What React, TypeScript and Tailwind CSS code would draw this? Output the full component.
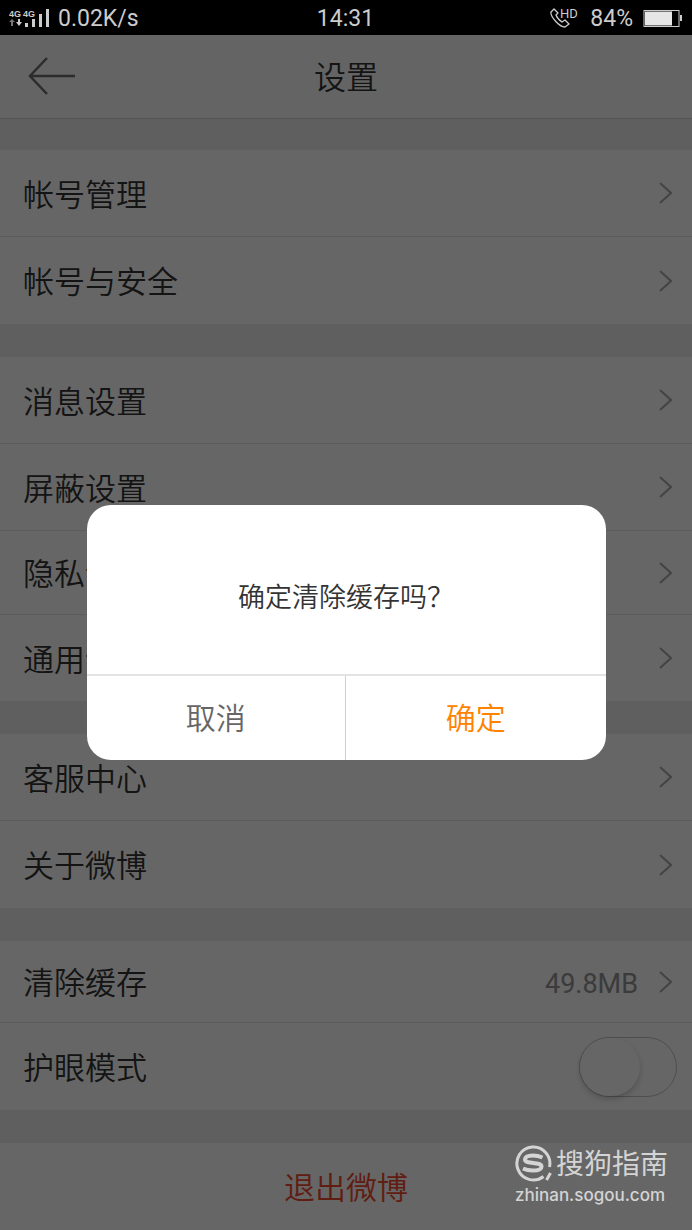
import React, { useState } from "react";

interface SettingItem {
  label: string;
  value?: string;
  toggle?: boolean;
  height?: string;
}

const sections: SettingItem[][] = [
  [{ label: "帐号管理" }, { label: "帐号与安全" }],
  [
    { label: "消息设置" },
    { label: "屏蔽设置" },
    { label: "隐私设置", height: "h-[84px]" },
    { label: "通用设置", height: "h-[86px]" },
  ],
  [{ label: "客服中心" }, { label: "关于微博" }],
  [
    { label: "清除缓存", value: "49.8MB", height: "h-[82px]" },
    { label: "护眼模式", toggle: true },
  ],
];

export default function App() {
  return (
    <div className="flex min-h-screen flex-col bg-black font-['Noto_Sans_CJK_SC',sans-serif] font-[350]">
      <StatusBar />
      <div className="relative flex grow flex-col bg-[#eeeeee]">
        <Header />
        <main className="flex flex-col gap-[33px] pt-[31px]">
          {sections.map((items) => (
            <SettingSection key={items[0].label} items={items} />
          ))}
          <button className="h-[87px] w-full bg-white pb-0.5 text-center text-[31px] leading-none text-[#f04a2c]">
            退出微博
          </button>
        </main>
        <ConfirmDialog />
        <Watermark />
      </div>
    </div>
  );
}

function StatusBar() {
  return (
    <div className="grid h-[35px] grid-cols-3 items-center bg-black pt-0.5 pr-[10px] pl-[9px] font-[Roboto,sans-serif] text-[23px] leading-none font-normal text-[#cccccc]">
      <div className="flex items-center gap-[7px]">
        <SignalIcon />
        <span>0.02K/s</span>
      </div>
      <span className="text-center">14:31</span>
      <div className="flex items-center justify-end gap-[10px]">
        <CallIcon />
        <span>84%</span>
        <BatteryIcon />
      </div>
    </div>
  );
}

function Header() {
  return (
    <header className="grid h-[84px] grid-cols-3 items-center border-b border-[#cccccc] bg-[#fbfbfb] px-7 pb-0.5">
      <button aria-label="返回" className="w-12">
        <svg width="48" height="40" viewBox="0 0 48 40" fill="none" stroke="#6e6e6e" strokeWidth="2.5">
          <path d="M19 2 L2 20 L19 38 M2 20 H47" />
        </svg>
      </button>
      <h1 className="pb-0.5 text-center text-[32px] leading-none text-[#333333]">设置</h1>
    </header>
  );
}

function SettingSection({ items }: { items: SettingItem[] }) {
  return (
    <section className="divide-y divide-[#e6e6e6] bg-white">
      {items.map((item) =>
        item.toggle ? (
          <ToggleRow key={item.label} label={item.label} />
        ) : (
          <button
            key={item.label}
            className={`flex w-full items-center pr-5 pl-[23px] text-left ${item.height ?? "h-[87px]"}`}
          >
            <span className="grow pb-0.5 text-[31px] leading-none text-[#333333]">{item.label}</span>
            {item.value && (
              <span className="mr-[21px] pt-1.5 font-[Roboto,sans-serif] text-[27px] leading-none font-normal text-[#939393]">
                {item.value}
              </span>
            )}
            <svg width="13" height="22" viewBox="0 0 13 22" fill="none" stroke="#a8a8a8" strokeWidth="2">
              <path d="M1 1 L12 11 L1 21" />
            </svg>
          </button>
        )
      )}
    </section>
  );
}

function ToggleRow({ label }: { label: string }) {
  const [on, setOn] = useState(false);

  return (
    <label className="flex h-[87px] items-center justify-between pr-[15px] pl-[23px]">
      <span className="pb-0.5 text-[31px] leading-none text-[#333333]">{label}</span>
      <input
        type="checkbox"
        role="switch"
        checked={on}
        onChange={(e) => setOn(e.target.checked)}
        className="flex h-[60px] w-[98px] appearance-none rounded-full border border-[#c4c4c4] bg-white before:h-full before:w-[60px] before:rounded-full before:bg-white before:shadow-[0_3px_6px_rgba(0,0,0,0.2)] checked:justify-end checked:bg-[#ff8200]"
      />
    </label>
  );
}

function ConfirmDialog() {
  return (
    <div className="absolute inset-0 flex items-center justify-center bg-black/60">
      <div role="dialog" aria-label="清除缓存" className="w-3/4 overflow-hidden rounded-3xl bg-white">
        <p className="flex h-[169px] items-center justify-center pt-3 text-[27px] leading-none text-[#333333]">
          确定清除缓存吗？
        </p>
        <div className="grid h-[86px] grid-cols-2 divide-x divide-[#cfcfcf] border-t-2 border-[#e3e3e3] text-[30px] leading-none">
          <button className="pb-1 text-[#666666]">取消</button>
          <button className="pb-1 text-[#ff8200]">确定</button>
        </div>
      </div>
    </div>
  );
}

function Watermark() {
  return (
    <div className="absolute right-6 bottom-[26px] flex flex-col gap-[5px] font-normal text-[#d4d4d4]">
      <div className="flex items-center gap-1">
        <SogouLogo />
        <span className="pb-1 text-[28px] leading-none">搜狗指南</span>
      </div>
      <span className="font-[Inter,sans-serif] text-[17px] leading-none font-medium">zhinan.sogou.com</span>
    </div>
  );
}

function SignalIcon() {
  return (
    <svg width="42" height="20" viewBox="0 0 42 20" fill="#cccccc">
      <text x="0" y="8" fontSize="9" fontWeight="700" fontFamily="Liberation Sans">4G</text>
      <text x="14" y="8" fontSize="9" fontWeight="700" fontFamily="Liberation Sans">4G</text>
      <path d="M3 10 L6 13 H4 V17 H2 V13 H0 Z" fill="#777777" />
      <path d="M10 17 L13 13 H11 V10 H9 V13 H7 Z" />
      <path d="M16 14h3v4h-3z M23 10h3v8h-3z M30 5h3v13h-3z M37 0h3v18h-3z" />
    </svg>
  );
}

function CallIcon() {
  return (
    <svg width="30" height="30" viewBox="0 -4 30 30" fill="none" stroke="#cccccc" strokeWidth="1.3">
      <path
        d="M4 1 L1 4 C0 8 9 19 15 19 L19 16 L15 12 L12 14 C9 12 7 10 6 7 L8 5 Z"
        strokeLinejoin="round"
      />
      <text x="10" y="10" fontSize="13" fill="#cccccc" stroke="none" fontFamily="Roboto">HD</text>
    </svg>
  );
}

function BatteryIcon() {
  return (
    <svg width="39" height="18" viewBox="0 0 39 18" fill="none">
      <rect x="1" y="0.500" width="35" height="16" stroke="#cccccc" />
      <rect x="2" y="1.500" width="27" height="14" fill="#e6e6e6" />
      <rect x="37" y="5" width="2" height="6" fill="#cccccc" />
    </svg>
  );
}

function SogouLogo() {
  return (
    <svg width="37" height="37" viewBox="0 0 37 37" fill="none" stroke="currentColor">
      <path d="M28.500 31.500 A16.500 16.500 0 1 1 34.500 22" strokeWidth="3" />
      <path d="M35.500 28 L31.500 35" strokeWidth="3" />
      <path
        d="M27.500 12.500 C24 11 21 10.500 18 10.500 C13 10.500 10 12 10 14.500 C10 19.500 26.500 16.500 26.500 21.500 C26.500 24.500 23 25.500 18 25.500 C14 25.500 11 25 8 23.500"
        strokeWidth="4"
      />
    </svg>
  );
}
